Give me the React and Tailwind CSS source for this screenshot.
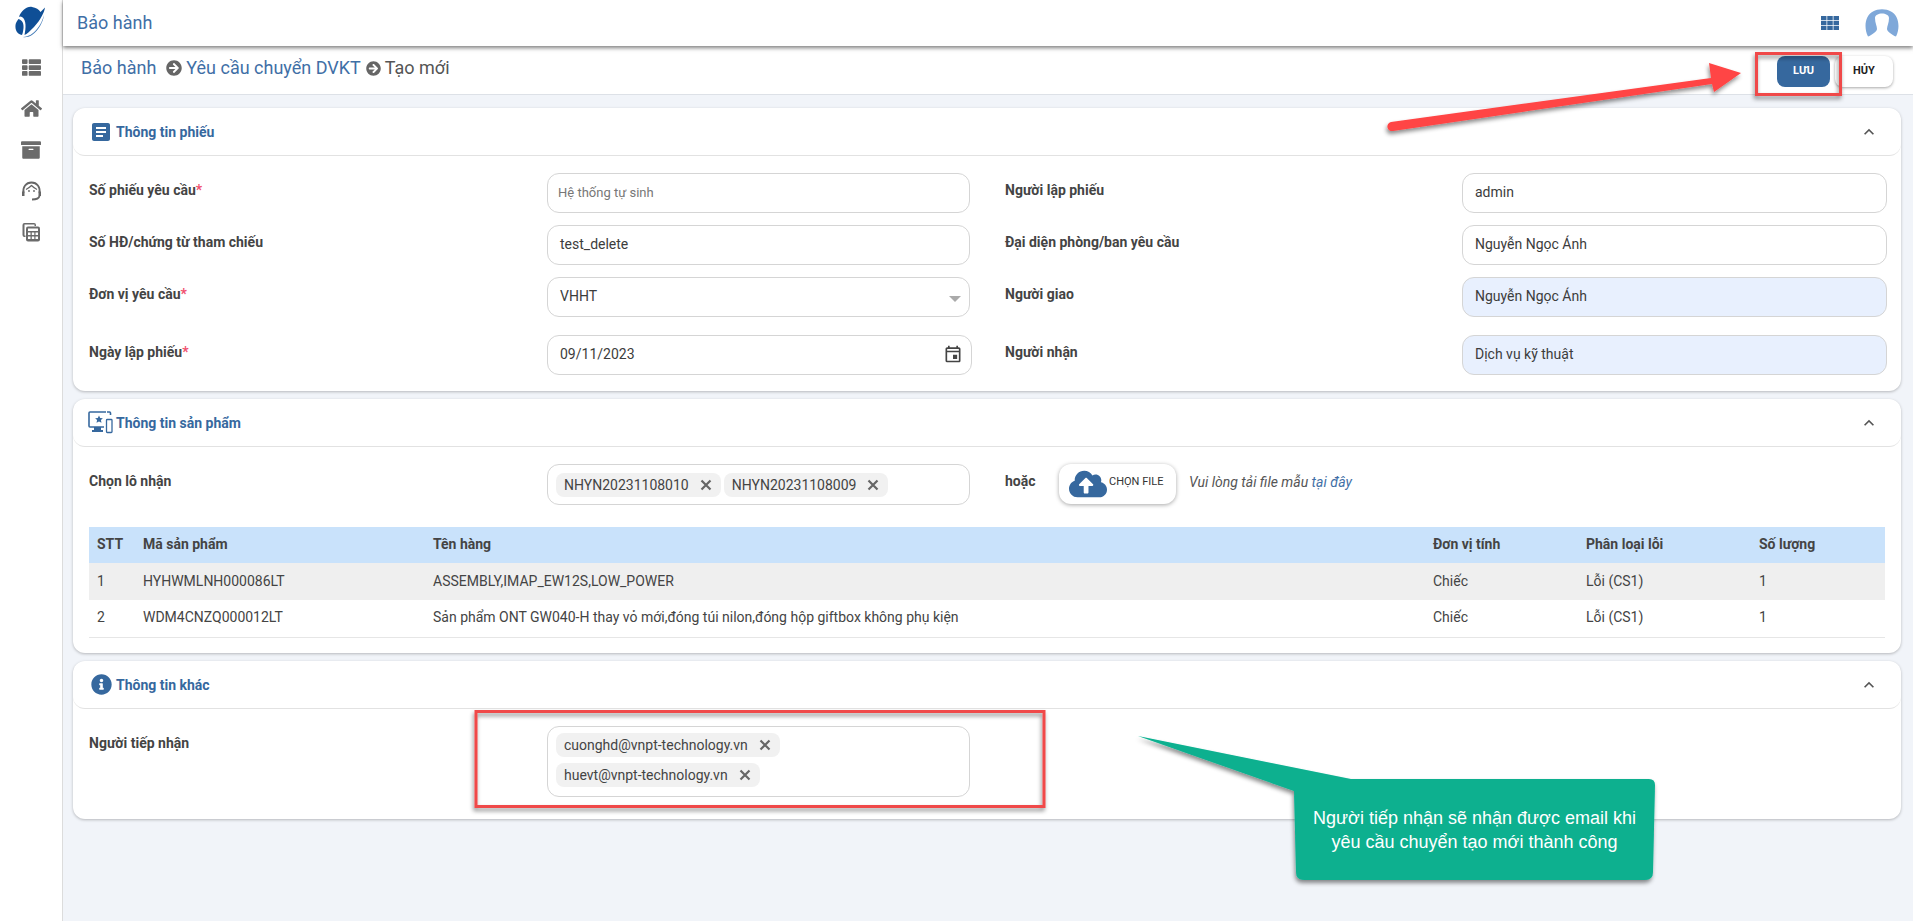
import React from 'react';
import { FaThList, FaHome, FaArchive, FaArrowCircleRight, FaInfoCircle, FaCloudUploadAlt } from 'react-icons/fa';
import { MdArticle, MdKeyboardArrowUp, MdOutlineEvent } from 'react-icons/md';

const Logo = () => (
  <svg width="30" height="32" viewBox="0 0 30 32" fill="#0f4f96">
    <path d="M4 11 C6 5 12 0 17 1 C21 1.500 24 3.500 25.500 6 L30 1.500 C29.500 6 25.500 14 19 21 C15 25 12 28 9.500 29 C11 22 11.500 14 7 11 C5.500 10 4.500 10.500 4 11Z" />
    <path d="M3.500 13 C7 14 9 17 8.500 22 C8 26 7.500 28 7 29 C2 28 0 24 0.500 19 C0.700 17 2 15 3.500 13Z" />
    <path d="M29 9 C28 16 24 24 17 29 C14 31 10.500 31.500 8 31 C14 30.500 18 28 22 23 C25.500 19 27.500 14 29 9Z" fill="#3f78b5" />
  </svg>
);

const Headset = () => (
  <svg width="21" height="20" viewBox="0 0 21 20" fill="none" stroke="#666" strokeWidth="1.800">
    <path d="M2.500 12 C1.500 6 5 1.500 10.500 1.500 C16 1.500 19.500 6 18.500 12" />
    <path d="M5 8.500 C7 7.500 9 6 10.500 4.500 C12 6 14 7.500 16 8.500" strokeWidth="1.200" />
    <path d="M1 10.500 h2.500 v4.500 h-2.500z M17.500 10.500 h2.500 v4.500 h-2.500z" fill="#666" stroke="none" />
    <path d="M18.500 15 C18 17.500 15 18.500 11 18.500" />
    <circle cx="8" cy="10" r="0.900" fill="#666" stroke="none" />
    <circle cx="13" cy="10" r="0.900" fill="#666" stroke="none" />
  </svg>
);

const Calcs = () => (
  <svg width="20" height="20" viewBox="0 0 20 20" fill="none">
    <path d="M4 1 h9 a2 2 0 0 1 2 2 v1 h-1.500 v-1.500 h-10 v11 h1 v1.500 h-1 a2 2 0 0 1-2-2 v-10 a2 2 0 0 1 2-2z" fill="#6b6b6b" />
    <rect x="5" y="4.500" width="14" height="15" rx="2" fill="#6b6b6b" />
    <rect x="7" y="6.500" width="10" height="2.500" fill="#fff" />
    <path d="M7 10.500h2.500v2.500H7z M10.800 10.500h2.500v2.500h-2.500z M14.500 10.500H17v2.500h-2.500z M7 14.500h2.500V17H7z M10.800 14.500h2.500V17h-2.500z M14.500 14.500H17V17h-2.500z" fill="#fff" />
  </svg>
);

const Avatar = () => (
  <svg width="34" height="28" viewBox="0 0 34 28">
    <path d="M3 27.500 C-2 17 1 6 8 2.500 C13 -0.500 21 -0.500 26 2.500 C33 6 36 17 31 27.500Z" fill="#7fa8d9" />
    <path d="M10 9 C10 3 24 3 24 9 C24 14 22 17 22 20 C22 23 27 25 31 28 L3 28 C7 25 12 23 12 20 C12 17 10 14 10 9Z" fill="#fff" />
  </svg>
);

const GridIcon = () => (
  <svg width="18" height="14" viewBox="0 0 18 14" fill="#36689e">
    <path d="M0 0h5.500v4.200H0z M6.250 0h5.500v4.200h-5.500z M12.500 0H18v4.200h-5.500z M0 4.900h5.500v4.200H0z M6.250 4.900h5.500v4.200h-5.500z M12.500 4.900H18v4.200h-5.500z M0 9.800h5.500V14H0z M6.250 9.800h5.500V14h-5.500z M12.500 9.800H18V14h-5.500z" />
  </svg>
);

const MonitorStar = () => (
  <svg width="25" height="23" viewBox="0 0 25 23" fill="none">
    <path d="M18 1 H2 a1 1 0 0 0-1 1 v13 a1 1 0 0 0 1 1 h14" stroke="#36689e" strokeWidth="1.600" />
    <path d="M19 1 h2.500 a1 1 0 0 1 1 1 v2" stroke="#36689e" strokeWidth="1.600" />
    <path d="M6 16 h7 v3 h2 v2 H4 v-2 h2z" fill="#36689e" />
    <path d="M11 4.500 l1.200 2.500 2.700.3-2 1.800.6 2.700-2.500-1.400-2.500 1.400.6-2.700-2-1.800 2.700-.3z" fill="#36689e" />
    <rect x="18.500" y="8.500" width="5.500" height="13" rx="0.800" stroke="#36689e" strokeWidth="1.300" fill="#fff" />
  </svg>
);

const CloseX = () => (
  <svg width="18" height="18" viewBox="0 0 18 18" fill="none" stroke="#666" strokeWidth="2.200">
    <path d="M4.500 4.500 L13.500 13.500 M13.500 4.500 L4.500 13.500" />
  </svg>
);

const Req = () => <span className="text-[#f0506e]">*</span>;

const Input = ({ value, placeholder, blue, className }) => (
  <div className={`h-10 rounded-xl border border-[#d5d5d5] px-3 pb-[2px] flex items-center text-sm text-[#3c3c3c] ${blue ? 'bg-[#e8f0fe]' : 'bg-white'} ${className || ''}`}>
    {value || <span className="-ml-[2px] mt-[2px] text-[13px] text-[#777]">{placeholder}</span>}
  </div>
);

const Label = ({ children }) => (
  <div className="text-sm font-bold text-[#444] pt-[7px]">{children}</div>
);

const Chip = ({ text }) => (
  <div className="h-6 rounded-lg bg-[#f1f1f1] pl-2 pr-[6px] flex items-center gap-[8px] text-sm text-[#444]">
    {text}
    <CloseX />
  </div>
);

const Card = ({ icon, title, children, className }) => (
  <section className={`bg-white rounded-xl shadow-[0_1px_3px_rgba(0,0,0,0.25)] ${className || ''}`}>
    <div className="h-12 rounded-xl border-b border-[#e2e2e2] flex items-center justify-between pr-[22px]">
      <div className="flex items-center text-sm font-bold text-[#36689e]">
        {icon}
        {title}
      </div>
      <MdKeyboardArrowUp className="text-[#555]" size={20} />
    </div>
    {children}
  </section>
);

const rows = [
  { stt: 1, code: 'HYHWMLNH000086LT', name: 'ASSEMBLY,IMAP_EW12S,LOW_POWER', unit: 'Chiếc', type: 'Lỗi (CS1)', qty: 1 },
  { stt: 2, code: 'WDM4CNZQ000012LT', name: 'Sản phẩm ONT GW040-H thay vỏ mới,đóng túi nilon,đóng hộp giftbox không phụ kiện', unit: 'Chiếc', type: 'Lỗi (CS1)', qty: 1 },
];

export default function App() {
  return (
    <div className="relative h-[921px] overflow-hidden flex bg-[#f1f4f9] font-[Roboto,sans-serif]">
      {/* Sidebar */}
      <aside className="w-[63px] shrink-0 bg-white border-r border-[#dcdcdc] flex flex-col items-center text-[#6b6b6b]">
        <div className="h-[47px] pt-[6px] pr-[2px]"><Logo /></div>
        <div className="h-[41px] flex items-center"><FaThList size={19} /></div>
        <div className="h-[41px] flex items-center"><FaHome size={21} /></div>
        <div className="h-[41px] flex items-center"><FaArchive size={20} /></div>
        <div className="h-[41px] flex items-center"><Headset /></div>
        <div className="h-[41px] flex items-center"><Calcs /></div>
      </aside>

      <div className="flex-1 min-w-0 flex flex-col">
        {/* Header */}
        <header className="relative z-10 h-[46px] bg-white shadow-[0_2px_4px_rgba(0,0,0,0.5)] flex items-center justify-between pl-[14px] pr-[14px]">
          <span className="text-lg text-[#3f6fa6]">Bảo hành</span>
          <div className="flex items-center gap-[26px]">
            <GridIcon />
            <Avatar />
          </div>
        </header>

        {/* Breadcrumb */}
        <div className="h-[49px] bg-white border-b border-[#dde1e7] flex items-start justify-between pl-[18px] pr-[20px]">
          <div className="flex items-center h-[24px] mt-[10px] text-lg text-[#3f6fa6]">
            <span>Bảo hành</span>
            <FaArrowCircleRight className="text-[#666] ml-[10px] mr-[4px]" size={16} />
            <span>Yêu cầu chuyển DVKT</span>
            <FaArrowCircleRight className="text-[#666] ml-[5px] mr-[4px]" size={15} />
            <span className="text-[#555]">Tạo mới</span>
          </div>
          <div className="flex mt-[10px]">
            <button className="w-[53px] h-[31px] rounded-lg bg-[#36689e] text-white text-[11px] font-bold">LƯU</button>
            <button className="w-[58px] h-[31px] ml-[5px] rounded-lg bg-white text-[#222] text-[11px] font-bold shadow-[0_1px_3px_rgba(0,0,0,0.35)]">HỦY</button>
          </div>
        </div>

        {/* Content */}
        <main className="pl-[10px] pr-[12px] pt-[13px] flex flex-col gap-2">
          <Card icon={<MdArticle className="text-[#36689e] ml-[16px] mr-[3px]" size={24} />} title="Thông tin phiếu" className="h-[283px]">
            <div className="pt-[17px] pl-4 grid grid-cols-[458px_423px_35px_457px_425px]">
              <Label>Số phiếu yêu cầu<Req /></Label>
              <Input placeholder="Hệ thống tự sinh" />
              <div />
              <Label>Người lập phiếu</Label>
              <Input value="admin" />

              <div className="mt-3"><Label>Số HĐ/chứng từ tham chiếu</Label></div>
              <Input value="test_delete" className="mt-3" />
              <div />
              <div className="mt-3"><Label>Đại diện phòng/ban yêu cầu</Label></div>
              <Input value="Nguyễn Ngọc Ánh" className="mt-3" />

              <div className="mt-3"><Label>Đơn vị yêu cầu<Req /></Label></div>
              <div className="relative mt-3">
                <Input value="VHHT" />
                <div className="absolute right-[9px] top-[19px] w-0 h-0 border-x-[6px] border-x-transparent border-t-[6px] border-t-[#aaa]" />
              </div>
              <div />
              <div className="mt-3"><Label>Người giao</Label></div>
              <Input value="Nguyễn Ngọc Ánh" blue className="mt-3" />

              <div className="mt-[18px]"><Label>Ngày lập phiếu<Req /></Label></div>
              <div className="relative mt-[18px] w-[425px]">
                <Input value="09/11/2023" />
                <MdOutlineEvent className="absolute right-[9px] top-[9px] text-[#444]" size={20} />
              </div>
              <div />
              <div className="mt-[18px]"><Label>Người nhận</Label></div>
              <Input value="Dịch vụ kỹ thuật" blue className="mt-[18px]" />
            </div>
          </Card>

          <Card icon={<span className="ml-[15px] mr-[3px] flex"><MonitorStar /></span>} title="Thông tin sản phẩm" className="h-[254px]">
            <div className="pt-[17px] pl-4 flex items-start">
              <div className="w-[458px]"><Label>Chọn lô nhận</Label></div>
              <div className="w-[423px] h-[41px] rounded-xl border border-[#d5d5d5] pl-2 flex items-center gap-[3px]">
                <Chip text="NHYN20231108010" />
                <Chip text="NHYN20231108009" />
              </div>
              <div className="ml-[35px] w-[54px]"><Label>hoặc</Label></div>
              <button className="w-[117px] h-10 rounded-xl bg-white shadow-[0_1px_4px_rgba(0,0,0,0.35)] flex items-center pl-[10px] text-[11px] text-[#333]">
                <FaCloudUploadAlt className="text-[#36689e] mr-[2px]" size={38} />
                <span className="-mt-[4px] whitespace-nowrap">CHỌN FILE</span>
              </button>
              <div className="ml-[13px] pt-[8px] text-sm italic text-[#555]">
                Vui lòng tải file mẫu <span className="text-[#3f6fa6]">tại đây</span>
              </div>
            </div>

            <div className="mt-[22px] ml-4 w-[1796px]">
              <table className="w-full table-fixed border-collapse text-sm text-[#444]">
                <colgroup>
                  <col className="w-[46px]" />
                  <col className="w-[298px]" />
                  <col className="w-[1000px]" />
                  <col className="w-[153px]" />
                  <col className="w-[173px]" />
                  <col />
                </colgroup>
                <thead>
                  <tr className="h-[36px] bg-[#c9e2fb] text-left">
                    <th className="pl-2 pb-[2px] font-bold">STT</th>
                    <th className="pl-[8px] pb-[2px] font-bold">Mã sản phẩm</th>
                    <th className="pb-[2px] font-bold">Tên hàng</th>
                    <th className="pb-[2px] font-bold">Đơn vị tính</th>
                    <th className="pb-[2px] font-bold">Phân loại lỗi</th>
                    <th className="pb-[2px] font-bold">Số lượng</th>
                  </tr>
                </thead>
                <tbody>
                  {rows.map((r, i) => (
                    <tr key={r.stt} className={i === 0 ? 'h-[37px] bg-[#efefef]' : 'h-[37px] border-b border-[#e6e6e6]'}>
                      <td className="pl-2 pb-[2px]">{r.stt}</td>
                      <td className="pl-[8px] pb-[2px]">{r.code}</td>
                      <td className="pb-[2px]">{r.name}</td>
                      <td className="pb-[2px]">{r.unit}</td>
                      <td className="pb-[2px]">{r.type}</td>
                      <td className="pb-[2px]">{r.qty}</td>
                    </tr>
                  ))}
                </tbody>
              </table>
            </div>
          </Card>

          <Card icon={<FaInfoCircle className="text-[#36689e] ml-[18px] mr-[4px]" size={21} />} title="Thông tin khác" className="h-[158px]">
            <div className="pt-[17px] pl-4 flex items-start">
              <div className="w-[458px]"><Label>Người tiếp nhận</Label></div>
              <div className="w-[423px] h-[71px] rounded-xl border border-[#d5d5d5] pl-2 pt-[6px] flex flex-col items-start gap-[6px]">
                <Chip text="cuonghd@vnpt-technology.vn" />
                <Chip text="huevt@vnpt-technology.vn" />
              </div>
            </div>
          </Card>
        </main>
      </div>

      {/* Annotations drawn over the page */}
      <svg className="absolute inset-0 z-20 pointer-events-none" width="1913" height="921">
        <defs>
          <filter id="sh" x="-10%" y="-50%" width="120%" height="200%">
            <feDropShadow dx="-1" dy="3" stdDeviation="2" floodColor="#000" floodOpacity="0.45" />
          </filter>
        </defs>
        <g filter="url(#sh)">
          <path d="M1391 122 L1711 78 L1709 63 L1741 73 L1714 92 L1712 84 L1393 131 A4.500 4.500 0 0 1 1391 122Z" fill="#ff4444" />
          <rect x="1756.500" y="53.500" width="84" height="41" fill="none" stroke="#f04848" strokeWidth="3" />
          <rect x="476" y="711.500" width="568" height="95" fill="none" stroke="#f04848" strokeWidth="3" />
          <path d="M1138 736 L1351 779 H1649 Q1655 779 1655 785 L1653 872 Q1653 880 1645 880 H1304 Q1296 880 1296 872 L1294 791Z" fill="#08b08f" />
        </g>
      </svg>
      <div className="absolute z-30 left-[1294px] top-[806px] w-[361px] text-center text-lg leading-[24px] text-white font-['Liberation_Sans',sans-serif]">
        Người tiếp nhận sẽ nhận được email khi<br />yêu cầu chuyển tạo mới thành công
      </div>
    </div>
  );
}
